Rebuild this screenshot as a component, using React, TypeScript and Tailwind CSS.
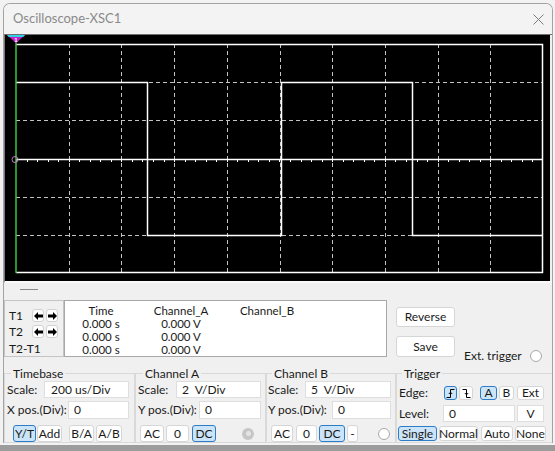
import React from 'react'
import clsx from 'clsx'

const font = "font-['Lato','Noto_Sans',sans-serif]"

interface BtnProps {
  className?: string;
  active?: boolean;
  children?: React.ReactNode;
}

const Btn: React.FC<BtnProps> = ({ className, active = false, children }) => (
  <button
    type="button"
    className={clsx(
      'flex h-full shrink-0 items-center justify-center whitespace-nowrap rounded-[3px] border text-[12px] leading-none text-[#1a1a1a]',
      active ? 'border-[#2d7cc8] bg-[#cce4f7]' : 'border-[#d6d6d6] bg-white',
      className
    )}
  >
    {children}
  </button>
)

const Field: React.FC<{ className?: string; children?: React.ReactNode; center?: boolean }> = ({ className, children, center }) => (
  <div
    className={clsx(
      'flex h-full shrink-0 items-center whitespace-pre border border-[#dedede] bg-white text-[12px] leading-none text-[#1a1a1a]',
      center ? 'justify-center' : 'pl-[5px]',
      className
    )}
  >
    {children}
  </div>
)

const Arrow = ({ right = false }: { right?: boolean }) => (
  <button type="button" className="flex h-[13px] w-[12px] items-center justify-center rounded-[3px] border border-[#d2d2d2] bg-white">
    <svg width="9" height="8" viewBox="0 0 9 8" className={right ? 'rotate-180' : ''}>
      <polygon points="0,4 4,0 4,2.4 9,2.4 9,5.6 4,5.6 4,8" fill="#000" />
    </svg>
  </button>
)

const Radio = ({ gray = false, className }: { gray?: boolean; className?: string }) =>
  gray ? (
    <span className={clsx('flex h-[12px] w-[12px] shrink-0 items-center justify-center rounded-full bg-[#c6c6c6]', className)}>
      <span className="block h-[5px] w-[5px] rounded-full bg-[#e4e4e4]" />
    </span>
  ) : (
    <span className={clsx('block h-[12px] w-[12px] shrink-0 rounded-full border border-[#a8a8a8] bg-white', className)} />
  )

const Scope = () => {
  const left = 11
  const top = 9
  const right = 538
  const bottom = 238
  const dx = (right - left) / 10
  const dy = (bottom - top) / 6
  const mid = Math.round(top + dy * 3)
  const ticks: number[] = []
  for (let x = left; x <= right; x += dx / 5) ticks.push(Math.round(x) + 0.5)

  return (
    <svg width="545" height="246" viewBox="0 0 545 246" className="block">
      {Array.from({ length: 9 }, (_, i) => {
        const x = Math.round(left + dx * (i + 1)) + 0.5
        return <line key={'v' + i} x1={x} y1={top} x2={x} y2={bottom} stroke="#c4c4c4" strokeDasharray="4 3" />
      })}
      {[1, 2, 4, 5].map(j => {
        const y = Math.round(top + dy * j) + 0.5
        return <line key={'h' + j} x1={left} y1={y} x2={right} y2={y} stroke="#c4c4c4" strokeDasharray="4 3" />
      })}
      <line x1={left} y1={mid + 0.5} x2={right} y2={mid + 0.5} stroke="#fff" strokeWidth="1.5" />
      {ticks.map((x, i) => (
        <line key={'t' + i} x1={x} y1={mid} x2={x} y2={mid + 3} stroke="#fff" />
      ))}
      <path d={`M${left} ${top + 0.5} H${right - 0.5} V${bottom - 0.5} H${left}`} fill="none" stroke="#fff" strokeWidth="1.5" />
      <path d="M11 47.5 H142.5 V200.5 H276.5 V47.5 H407.5 V200.5 H538" fill="none" stroke="#fff" strokeWidth="1.5" />
      <line x1={left} y1={5} x2={left} y2={bottom} stroke="#3cc43c" strokeWidth="1.5" />
      <polygon points="2,0 20,0 11,8" fill="#c21fc9" />
      <polygon points="2,0 20,0 18.2,2 3.8,2" fill="#2fd3e6" />
      <text x="11" y="6.5" fontSize="6" fill="#fff" textAnchor="middle" fontFamily="Liberation Sans, sans-serif" fontWeight="bold">1</text>
      <circle cx="10" cy={mid + 0.5} r="3" fill="none" stroke="#c77ad0" />
    </svg>
  )
}

export default function App() {
  return (
    <div className={clsx('h-[451px] w-[555px] overflow-hidden bg-[#f2f2f2] pl-[3px] pt-[3px]', font)}>
      <div className="w-[550px] overflow-hidden rounded-tl-[7px] rounded-tr-[7px] border border-b-0 border-[#a3a3a3] bg-[#f0f0f0]">
        {/* title bar */}
        <div className="flex h-[30px] items-center justify-between bg-[#f3f3f3] pl-[9px] pr-[8px]">
          <span className="text-[13px] text-[#8a8a8a]">Oscilloscope-XSC1</span>
          <svg width="11" height="11" viewBox="0 0 11 11">
            <path d="M0.5 0.5 L10.5 10.5 M10.5 0.5 L0.5 10.5" stroke="#7c7c7c" strokeWidth="1" />
          </svg>
        </div>

        {/* screen */}
        <div className="w-[548px] border-b-2 border-l border-t border-b-[#fafafa] border-l-[#7a7a7a] border-t-[#6f6f6f] pr-[2px]">
          <div className="h-[246px] w-[545px] bg-black">
            <Scope />
          </div>
        </div>

        {/* splitter */}
        <div className="ml-[16px] mt-[6px] h-px w-[18px] bg-[#8a8a8a]" />

        {/* cursor readout row */}
        <div className="mt-[10px] flex h-[57px] items-start text-[12px] leading-none text-[#1a1a1a]">
          <div className="flex h-[57px] w-[60px] shrink-0 flex-col border border-[#c4c4c4]">
            <div className="mt-[8px] flex h-[13px] items-center">
              <span className="w-[27px] pl-[4px]">T1</span>
              <div className="flex gap-[2px]">
                <Arrow />
                <Arrow right />
              </div>
            </div>
            <div className="mt-[3px] flex h-[13px] items-center">
              <span className="w-[27px] pl-[4px]">T2</span>
              <div className="flex gap-[2px]">
                <Arrow />
                <Arrow right />
              </div>
            </div>
            <span className="mt-[5px] pl-[4px]">T2-T1</span>
          </div>

          <div className="grid h-[57px] w-[323px] shrink-0 grid-cols-[72px_88px_84px] content-start border border-[#a8a8a8] bg-white pt-[3px] text-[11.5px] leading-[13px]">
            <span className="text-center">Time</span>
            <span className="text-center">Channel_A</span>
            <span className="text-center">Channel_B</span>
            {[0, 1, 2].map(i => (
              <React.Fragment key={i}>
                <span className="text-center">0.000 s</span>
                <span className="text-center">0.000 V</span>
                <span />
              </React.Fragment>
            ))}
          </div>

          <div className="ml-[9px] flex w-[59px] shrink-0 flex-col">
            <div className="mt-[7px] h-[20px]">
              <Btn className="w-full">Reverse</Btn>
            </div>
            <div className="mt-[9px] h-[21px]">
              <Btn className="w-full">Save</Btn>
            </div>
          </div>

          <div className="ml-[9px] mt-[50px] flex items-center gap-[8px]">
            <span>Ext. trigger</span>
            <Radio />
          </div>
        </div>

        {/* control groups */}
        <div className="mt-[9px] flex whitespace-nowrap text-[12px] leading-none text-[#1a1a1a]">
          <fieldset className="h-[77px] w-[131px] shrink-0 border border-[#d9d9d9]">
            <legend className="ml-[6px] px-[2px] leading-[15px]">Timebase</legend>
            <div className="flex h-[17px] items-center pl-[2px]">
              <span className="w-[37px]">Scale:</span>
              <Field className="w-[85px] pl-[6px]">200 us/Div</Field>
            </div>
            <div className="mt-[3px] flex h-[18px] items-center pl-[2px]">
              <span className="w-[61px]">X pos.(Div):</span>
              <Field className="w-[61px]">0</Field>
            </div>
            <div className="ml-[8px] mt-[6px] flex h-[17px]">
              <Btn active className="w-[23px]">Y/T</Btn>
              <Btn className="ml-[1px] w-[25px]">Add</Btn>
              <Btn className="ml-[7px] w-[25px]">B/A</Btn>
              <Btn className="ml-[2px] w-[26px]">A/B</Btn>
            </div>
          </fieldset>

          <fieldset className="h-[77px] w-[131px] shrink-0 border border-[#d9d9d9]">
            <legend className="ml-[7px] px-[2px] leading-[15px]">Channel A</legend>
            <div className="flex h-[17px] items-center pl-[2px]">
              <span className="w-[38px]">Scale:</span>
              <Field className="w-[85px]">2  V/Div</Field>
            </div>
            <div className="mt-[3px] flex h-[18px] items-center pl-[2px]">
              <span className="w-[61px]">Y pos.(Div):</span>
              <Field className="w-[62px]">0</Field>
            </div>
            <div className="ml-[4px] mt-[6px] flex h-[17px] items-center">
              <Btn className="w-[24px]">AC</Btn>
              <Btn className="ml-[2px] w-[23px]">0</Btn>
              <Btn active className="ml-[3px] w-[24px]">DC</Btn>
              <Radio gray className="ml-[26px]" />
            </div>
          </fieldset>

          <fieldset className="h-[77px] w-[130px] shrink-0 border border-[#d9d9d9]">
            <legend className="ml-[5px] px-[2px] leading-[15px]">Channel B</legend>
            <div className="flex h-[17px] items-center pl-[1px]">
              <span className="w-[37px]">Scale:</span>
              <Field className="w-[86px] pl-[4px]">5  V/Div</Field>
            </div>
            <div className="mt-[3px] flex h-[18px] items-center pl-[1px]">
              <span className="w-[64px]">Y pos.(Div):</span>
              <Field className="w-[59px]">0</Field>
            </div>
            <div className="ml-[4px] mt-[6px] flex h-[17px] items-center">
              <Btn className="w-[22px]">AC</Btn>
              <Btn className="ml-[3px] w-[21px]">0</Btn>
              <Btn active className="ml-[2px] w-[26px]">DC</Btn>
              <Btn className="ml-[2px] w-[11px]">-</Btn>
              <Radio className="ml-[20px]" />
            </div>
          </fieldset>

          <fieldset className="h-[77px] w-[156px] shrink-0 border border-r-0 border-[#d9d9d9]">
            <legend className="ml-[5px] px-[2px] leading-[15px]">Trigger</legend>
            <div className="mt-[5px] flex h-[14px] items-center pl-[2px]">
              <span className="w-[45px]">Edge:</span>
              <Btn active className="w-[13px]">
                <svg width="9" height="9" viewBox="0 0 9 9">
                  <path d="M0.5 8.5 H4.5 V0.5 H8.5 M2.8 5 L4.5 3.2 L6.2 5" fill="none" stroke="#000" />
                </svg>
              </Btn>
              <Btn className="ml-[2px] w-[14px]">
                <svg width="9" height="9" viewBox="0 0 9 9">
                  <path d="M0.5 0.5 H4.5 V8.5 H8.5 M2.8 4 L4.5 5.8 L6.2 4" fill="none" stroke="#000" />
                </svg>
              </Btn>
              <Btn active className="ml-[7px] w-[17px]">A</Btn>
              <Btn className="ml-[2px] w-[15px]">B</Btn>
              <Btn className="ml-[3px] w-[27px]">Ext</Btn>
            </div>
            <div className="mt-[5px] flex h-[17px] items-center pl-[2px]">
              <span className="w-[44px]">Level:</span>
              <Field className="w-[72px]">0</Field>
              <Field center className="ml-[2px] w-[27px]">V</Field>
            </div>
            <div className="ml-[1px] mt-[4px] flex h-[15px]">
              <Btn active className="w-[39px]">Single</Btn>
              <Btn className="ml-[2px] w-[39px]">Normal</Btn>
              <Btn className="ml-[3px] w-[32px]">Auto</Btn>
              <Btn className="ml-[2px] w-[31px]">None</Btn>
            </div>
          </fieldset>
        </div>
      </div>
      <div className="-ml-[3px] mt-[2px] h-[6px] w-[555px] bg-[#9c9c9c]" />
    </div>
  )
}
